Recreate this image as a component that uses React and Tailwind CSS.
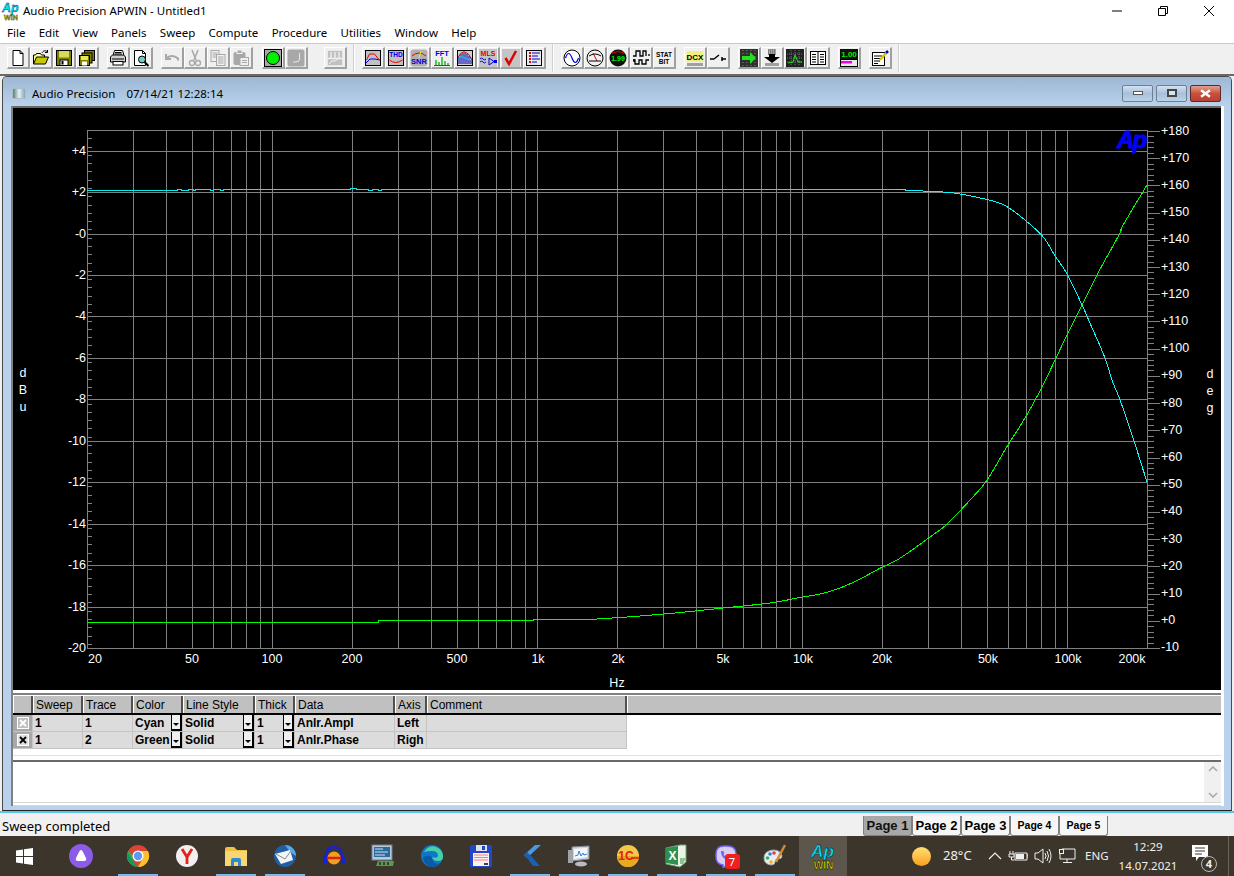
const sans = "font-['Noto_Sans',sans-serif]"

const logX = f => 87 + (Math.log10(f) - Math.log10(20)) * 265
const dbY = d => 648 - (d + 20) * 20.72
const degY = d => 131 + (180 - d) * 2.721

const gridFreqs = []
for (const dec of [10, 100, 1000, 10000, 100000]) {
  for (let m = 1; m <= 9; m++) {
    const f = dec * m
    if (f >= 20 && f <= 200000) gridFreqs.push(f)
  }
}

const xLabels = [['20', 95], ['50', 192], ['100', 272], ['200', 352], ['500', 457], ['1k', 538], ['2k', 618], ['5k', 723], ['10k', 803], ['20k', 882], ['50k', 988], ['100k', 1068], ['200k', 1132]]

// catmull-rom through the measured points, so the traces don't look faceted
function smooth(pts) {
  const out = []
  for (let i = 0; i < pts.length - 1; i++) {
    const p0 = pts[Math.max(i - 1, 0)], p1 = pts[i], p2 = pts[i + 1], p3 = pts[Math.min(i + 2, pts.length - 1)]
    for (let t = 0; t < 1; t += 0.125) {
      const a = t * t, b = a * t
      const x = 0.5 * (2 * p1[0] + (p2[0] - p0[0]) * t + (2 * p0[0] - 5 * p1[0] + 4 * p2[0] - p3[0]) * a + (3 * p1[0] - p0[0] - 3 * p2[0] + p3[0]) * b)
      const y = 0.5 * (2 * p1[1] + (p2[1] - p0[1]) * t + (2 * p0[1] - 5 * p1[1] + 4 * p2[1] - p3[1]) * a + (3 * p1[1] - p0[1] - 3 * p2[1] + p3[1]) * b)
      out.push(`${x.toFixed(1)},${y.toFixed(1)}`)
    }
  }
  out.push(pts[pts.length - 1].join(','))
  return out.join(' ')
}

const cyanFlat = '87,190.5 177,190.5 177,189.5 181,189.5 181,190.5 188,190.5 188,189.5 193,189.5 193,190.5 195,190.5 195,189.5 210,189.5 210,190.5 213,190.5 213,189.5 220,189.5 220,190.5 223,190.5 223,189.5 350,189.5 350,188.5 356,188.5 356,189.5 368,189.5 368,190.5 372,190.5 372,189.5 378,189.5 378,190.5 381,190.5 381,189.5 895,189.5'
const cyanCurve = smooth([[895, 189.5], [923, 191], [951, 192.7], [977, 197.3], [997, 202.3], [1008, 207.3], [1025, 220], [1043, 236.7], [1055, 255.7], [1067, 274], [1082, 305], [1093, 330], [1105, 358], [1112, 380], [1120, 400], [1133, 438], [1147, 482]])
const greenFlat = '87,622.5 378,622.5 378,620.5 533,620.5 533,619.5 590,619.5'
const greenCurve = smooth([[590, 619.5], [640, 616], [680, 612.5], [723, 608], [770, 603], [800, 597.5], [820, 594], [840, 588], [860, 579], [880, 568.3], [897, 560], [912, 550], [930, 537], [947, 524], [970, 500], [987, 480], [1008, 445], [1025, 418], [1042, 387], [1056, 358], [1067, 335], [1082, 305], [1098, 273], [1120, 233], [1122, 227], [1147, 185]])

function Plot() {
  const leftTicks = []
  for (let i = 0; i <= 62; i++) leftTicks.push(5 - i * 0.4)
  const rightTicks = []
  for (let d = -10; d <= 180; d += 2) rightTicks.push(d)
  const degLabels = []
  for (let d = 180; d >= -10; d -= 10) degLabels.push(d)
  return (
    <svg viewBox="13 108 1208 582" width="1208" height="582" className="block font-['Liberation_Sans',sans-serif]">
      <g stroke="#808080" strokeWidth="1" shapeRendering="crispEdges">
        {gridFreqs.map(f => <line key={f} x1={logX(f)} x2={logX(f)} y1="130.5" y2="648" />)}
        {[-20, -18, -16, -14, -12, -10, -8, -6, -4, -2, 0, 2, 4, 5].map(d => <line key={d} x1="87" x2="1147" y1={Math.round(dbY(d)) + 0.5} y2={Math.round(dbY(d)) + 0.5} />)}
        <line x1="1147.5" x2="1147.5" y1="130" y2="648" />
        {leftTicks.map(d => <line key={d} x1="87" x2="92" y1={Math.round(dbY(d)) + 0.5} y2={Math.round(dbY(d)) + 0.5} />)}
        {rightTicks.map(d => <line key={d} x1="1147" x2={d % 10 === 0 ? 1160 : 1154} y1={Math.round(degY(d)) + 0.5} y2={Math.round(degY(d)) + 0.5} />)}
      </g>
      <polyline points={greenFlat} fill="none" stroke="#00ff00" strokeWidth="1" shapeRendering="crispEdges" />
      <polyline points={greenCurve} fill="none" stroke="#00ff00" strokeWidth="1" shapeRendering="crispEdges" />
      <polyline points={cyanFlat} fill="none" stroke="#00f0f0" strokeWidth="1" shapeRendering="crispEdges" />
      <polyline points={cyanCurve} fill="none" stroke="#00ffff" strokeWidth="1" shapeRendering="crispEdges" />
      <g fill="#ffffff" fontSize="12.5">
        {[4, 2, 0, -2, -4, -6, -8, -10, -12, -14, -16, -18, -20].map(d => (
          <text key={d} x="86" y={dbY(d) + 4} textAnchor="end">{d > 0 ? `+${d}` : d === 0 ? '-0' : d}</text>
        ))}
        {degLabels.map(d => <text key={d} x="1161" y={degY(d) + 3.5}>{d >= 0 ? `+${d}` : d}</text>)}
        {xLabels.map(([t, x]) => <text key={t} x={x} y="663" textAnchor="middle">{t}</text>)}
        <text x="617" y="687" textAnchor="middle">Hz</text>
        <text x="23" y="377" textAnchor="middle">d</text>
        <text x="23" y="394" textAnchor="middle">B</text>
        <text x="23" y="411" textAnchor="middle">u</text>
        <text x="1210" y="378" textAnchor="middle">d</text>
        <text x="1210" y="395" textAnchor="middle">e</text>
        <text x="1210" y="412" textAnchor="middle">g</text>
      </g>
      <text x="1117" y="148" fill="#0000ff" stroke="#0000ff" strokeWidth="0.9" fontSize="24" fontWeight="700" fontStyle="italic" letterSpacing="-1.5">Ap</text>
    </svg>
  )
}

const txt = (s, x, y, fill, size = 7) => (
  <text x={x} y={y} fill={fill} fontSize={size} fontWeight="700" fontFamily="'Liberation Sans',sans-serif" textAnchor="middle">{s}</text>
)

const Frame = ({ bg = '#c0c0c0', children }) => (
  <>
    <rect x="1.5" y="1.5" width="15" height="15" fill={bg} stroke="#000" />
    {children}
  </>
)

const Gly = {
  new: <><path d="M4 1.5h7l3 3v12H4z" fill="#fff" stroke="#000" /><path d="M11 1.5v3h3" fill="none" stroke="#000" /></>,
  open: <><path d="M1.5 15V6h2l1-1.5h4L9.5 6h3v2" fill="#ffffa0" stroke="#000" /><path d="M1.5 15l3-7h12l-3 7z" fill="#c8c800" stroke="#000" /><path d="M10 4c1-2 3-3 5-1.500M15.500 1v2.500h-2.500" fill="none" stroke="#000" /></>,
  save: <><rect x="1.5" y="1.5" width="15" height="15" fill="#808000" stroke="#000" /><rect x="4" y="2" width="10" height="6.5" fill="#d8d860" /><rect x="5" y="11" width="8" height="5.5" fill="#fff" stroke="#000" /><rect x="6.5" y="12" width="2" height="3.5" fill="#000" /></>,
  saveall: <><rect x="6.5" y="1.5" width="10" height="10" fill="#808000" stroke="#000" /><rect x="4" y="4" width="10" height="10" fill="#808000" stroke="#000" /><rect x="1.5" y="6.5" width="10" height="10" fill="#808000" stroke="#000" /><rect x="3" y="7" width="7" height="4" fill="#e8e860" /><rect x="4" y="12.5" width="5" height="4" fill="#fff" /></>,
  print: <><path d="M5.5 1.5h8l1.5 5H4z" fill="#fff" stroke="#000" /><path d="M6 3.500h6.500M5.500 5h7.500" stroke="#000" /><path d="M1.5 8l2-2h11l2 2v5h-15z" fill="#d0d0d0" stroke="#000" /><path d="M3 10h12" stroke="#000" /><rect x="4" y="12.5" width="10" height="3.5" fill="#fff" stroke="#000" /></>,
  preview: <><path d="M2.5 1.5h8l3 3v12h-11z" fill="#fff" stroke="#000" /><path d="M10.5 1.5v3h3" fill="none" stroke="#000" /><circle cx="10" cy="10.5" r="3.5" fill="#66cccc" stroke="#000" /><path d="M12.5 13l4 4" stroke="#000" strokeWidth="2" /></>,
  undo: <path d="M3 5v5h5M3.500 9.500C6 6.500 11 6 15 9.500v2" fill="none" stroke="#a8a8a8" strokeWidth="2" />,
  cut: <><path d="M6 1l4 10M12 1L8 11" stroke="#a8a8a8" strokeWidth="1.5" /><circle cx="6" cy="14" r="2.5" fill="none" stroke="#a8a8a8" strokeWidth="1.3" /><circle cx="12" cy="14" r="2.5" fill="none" stroke="#a8a8a8" strokeWidth="1.3" /></>,
  copy: <><rect x="2" y="1.5" width="8" height="11" fill="#f0f0f0" stroke="#a8a8a8" /><path d="M3.500 4h5M3.500 6h5M3.500 8h5" stroke="#a8a8a8" /><rect x="7.5" y="5.5" width="8.5" height="11" fill="#f0f0f0" stroke="#a8a8a8" /><path d="M9 8h5.500M9 10h5.500M9 12h5.500M9 14h5.500" stroke="#a8a8a8" /></>,
  paste: <><rect x="1.5" y="3" width="12" height="13" rx="2" fill="#a8a8a8" /><rect x="5" y="1" width="5" height="3.5" fill="#a8a8a8" stroke="#f0f0f0" /><rect x="8" y="8.5" width="8.5" height="8" fill="#f0f0f0" stroke="#a8a8a8" /><path d="M10 11.500h5M10 13.500h5" stroke="#a8a8a8" /></>,
  go: <><rect x="0.5" y="0.5" width="17" height="17" fill="#a8a8a8" stroke="#000" /><circle cx="9" cy="9" r="6.5" fill="#00f000" stroke="#000" /></>,
  stop: <><rect x="0.5" y="0.5" width="17" height="17" rx="2" fill="#a8a8a8" /><path d="M12.500 4v6q0 3-3.500 3H6" fill="none" stroke="#e8e8e8" /></>,
  graphOff: <><rect x="1.5" y="1.5" width="15" height="15" fill="#c0c0c0" stroke="#e8e8e8" /><path d="M2 9.500h14M5 3v6M9 3v6M13 3v6" stroke="#f0f0f0" strokeWidth="1.3" /><path d="M3 15l3-3h3l3-2 3-1" fill="none" stroke="#f0f0f0" /></>,
  sweep: <Frame><path d="M2.500 11l3-6h5l4 5" fill="none" stroke="#f00000" /><path d="M2 14l4-4h5l5 1" fill="none" stroke="#0000f0" /></Frame>,
  thd: <Frame>{txt('THD', 9, 8, '#0000e0', 6.5)}<path d="M2.500 11q6 5 13 0" fill="none" stroke="#f00000" /></Frame>,
  snr: <><rect x="0.5" y="0.5" width="17" height="17" rx="3" fill="#b0b0b0" /><path d="M2 7q7-6 14 0" fill="none" stroke="#f00000" /><path d="M11 2L9 9" stroke="#f0f000" />{txt('SNR', 9, 15, '#0000e0', 7.5)}</>,
  fft: <>{txt('FFT', 9, 7, '#0000f0', 7.5)}<path d="M1 16.500h16" stroke="#f00000" /><path d="M3 16v-5M6 16v-3M9 16V8M12 16v-4M15 16v-2" stroke="#00b000" strokeWidth="1.3" /></>,
  bars: <Frame bg="#d0d0d0"><path d="M3 15V8M5 15V5M7 15V4M9 15V4M11 15V5M13 15V7M15 15v-4" stroke="#0000c0" /><path d="M2 9q3-3 7 0t7 0" fill="none" stroke="#00e0e0" /><path d="M2 9q3-7 7-6t7 8" fill="none" stroke="#c00000" /></Frame>,
  mls: <><rect width="18" height="18" fill="#c4c4c4" />{txt('MLS', 9, 7, '#e00000', 7)}<path d="M1 10q2-2 3 0t3 0M1 13q2-2 3 0t3 0" fill="none" stroke="#0000e0" /><path d="M10 9v7l5-3.500z" fill="none" stroke="#0000e0" /><rect x="15" y="11" width="3" height="3" fill="#0000e0" /></>,
  check: <><rect width="18" height="18" fill="#c4c4c4" /><path d="M3.500 9l3.500 6L14 2" fill="none" stroke="#e00000" strokeWidth="2.5" /></>,
  list: <Frame bg="#e8e8e8"><path d="M4 4h2M4 7h2M4 10h2M4 13h2" stroke="#f00000" strokeWidth="2" /><path d="M7 4h8M7 7h6M7 10h8M7 13h5" stroke="#0000d0" /></Frame>,
  sine: <><circle cx="9" cy="9" r="8" fill="#fff" stroke="#000" /><path d="M2.500 9q3-9 6.500 0t6.500 0" fill="none" stroke="#0000e0" strokeWidth="1.2" /></>,
  meter: <><circle cx="9" cy="9" r="8" fill="#f0f0f0" stroke="#000" /><path d="M3 7q6-4 12 0" fill="none" stroke="#000" /><path d="M7 4l4 8" stroke="#e00000" /><path d="M3 12h12" stroke="#000" /></>,
  disp: <><circle cx="9" cy="9" r="8.5" fill="#101010" /><path d="M3 4q6-3 12 0" stroke="#e00000" fill="none" />{txt('1.99', 9, 12, '#00f000', 7)}</>,
  square: <path d="M1 7h3V2h4v5h3V2h3v5M17 5v2M1 11h2v4h4v-4h3v4h4v-4h3M2 10v3" fill="none" stroke="#000" strokeWidth="1.3" />,
  stat: <>{txt('STAT', 9, 8, '#000', 6.5)}{txt('BIT', 9, 15, '#000', 6.5)}</>,
  dcx: <><rect x="0.5" y="2" width="17" height="11" fill="#f0f080" />{txt('DCX', 9, 11, '#000', 8)}<rect x="1" y="14" width="16" height="3" fill="#a0a0a0" /></>,
  sw: <path d="M1 10h4M5 10l5-4M13 8v4M13 10h4" fill="none" stroke="#000" strokeWidth="1.5" />,
  fwd: <><rect width="18" height="18" fill="#303030" /><path d="M3 1v16M7 1v16M11 1v16M15 1v16" stroke="#808080" strokeDasharray="1 2" /><path d="M2 7h8V3l6 6-6 6v-4H2z" fill="#20e020" /></>,
  down: <><rect x="5" y="0" width="8" height="6" fill="#a0a0a0" /><path d="M5 1h8M5 3h8M5 5h8" stroke="#606060" strokeDasharray="1 1" /><path d="M1 8h5V5h6v3h5l-8 6z" fill="#000" /><rect x="2" y="14" width="14" height="3" fill="#a0a0a0" /></>,
  scope: <><rect width="18" height="18" fill="#202020" /><path d="M5 1v16M9 1v16M13 1v16M1 5h16M1 9h16M1 13h16" stroke="#707070" strokeDasharray="1 1" /><path d="M2 14l5-1 2-7 3 7h4" fill="none" stroke="#20e020" /></>,
  book: <><rect x="1.5" y="2.5" width="15" height="13" fill="#fff" stroke="#000" /><path d="M9 3v12M3 5.500h4M3 8h4M3 10.500h4M3 13h4M11 5.500h4M11 8h4M11 10.500h4M11 13h4" stroke="#000" /></>,
  gauge: <><rect width="18" height="10" fill="#101010" />{txt('1.00', 9, 8, '#00f000', 8)}<rect x="0.5" y="10.5" width="17" height="7" fill="#e8e8e8" stroke="#000" /><rect x="1" y="12" width="11" height="2.5" fill="#f000f0" /></>,
  notes: <><rect x="1.5" y="3.5" width="12" height="13" fill="#fff" stroke="#000" /><path d="M3 7h8M3 9.500h8M3 12h6M3 14.500h4" stroke="#000" /><path d="M9 11l6-7" stroke="#e0c000" strokeWidth="2.5" /><path d="M15 4l2-2" stroke="#0000c0" strokeWidth="2.5" /></>,
}

const toolGroups = [
  { ml: 'ml-[7px]', items: ['new', 'open', 'save', 'saveall'] },
  { ml: 'ml-[8px]', items: ['print', 'preview'] },
  { ml: 'ml-[8px]', items: ['undo', 'cut', 'copy', 'paste'] },
  { ml: 'ml-[9px]', items: ['go', 'stop'] },
  { ml: 'ml-[16px]', items: ['graphOff'] },
  { ml: 'ml-[6px]', sep: true, items: ['sweep', 'thd', 'snr', 'fft', 'bars', 'mls', 'check', 'list'] },
  { ml: 'ml-[6px]', sep: true, items: ['sine', 'meter', 'disp', 'square', 'stat'] },
  { ml: 'ml-[8px]', items: ['dcx', 'sw'] },
  { ml: 'ml-[8px]', items: ['fwd', 'down', 'scope', 'book'] },
  { ml: 'ml-[8px]', items: ['gauge'] },
  { ml: 'ml-[8px]', items: ['notes'] },
]

function Toolbar() {
  return (
    <div className="h-[31px] shrink-0 flex items-center bg-[#f0f0f0] border-t border-t-[#c8c8c8] border-b border-b-[#f0f0f0] pb-[1px]">
      {toolGroups.map((g, i) => (
        <div key={i} className={`flex items-center ${g.ml}`}>
          {g.sep && <div className="w-[2px] h-[28px] bg-[#d0d0d0] border-r border-white mr-[7px]" />}
          {g.items.map(k => (
            <div key={k} className="w-[23px] h-[22px] flex items-center justify-center bg-[#f0f0f0] border-t border-l border-t-white border-l-white border-r-2 border-b-2 border-r-[#a0a0a0] border-b-[#a0a0a0]">
              <svg viewBox="0 0 18 18" width="18" height="18">{Gly[k]}</svg>
            </div>
          ))}
        </div>
      ))}
      <div className="w-[2px] h-[28px] bg-[#d0d0d0] border-r border-white ml-[6px]" />
    </div>
  )
}

function ApLogo({ size = 24 }) {
  return (
    <svg viewBox="0 0 26 26" width={size} height={size} className="overflow-visible">
      <text x="12" y="14" fill="#00e0f0" stroke="#002030" strokeWidth="0.5" fontSize="18" fontWeight="700" fontStyle="italic" textAnchor="middle" fontFamily="'Liberation Sans',sans-serif">Ap</text>
      <text x="13" y="26" fill="#f8f800" stroke="#000" strokeWidth="0.5" fontSize="10.5" fontWeight="700" textAnchor="middle" fontFamily="'Liberation Sans',sans-serif">WIN</text>
    </svg>
  )
}

const WinBtn = ({ children, red }) => (
  <div className={`w-[31px] h-[17px] flex items-center justify-center rounded-[2px] border ${red ? 'border-[#5c2a2a] bg-gradient-to-b from-[#e0a090] via-[#c8503c] to-[#b84030]' : 'border-[#6d7f94] bg-gradient-to-b from-[#d4e2f0] via-[#a8c0da] to-[#bcd2e8]'}`}>
    {children}
  </div>
)

const cols = [
  ['', 'w-[20px]'], ['Sweep', 'w-[50px]'], ['Trace', 'w-[50px]'], ['Color', 'w-[50px]'], ['Line Style', 'w-[72px]'],
  ['Thick', 'w-[40px]'], ['Data', 'w-[100px]'], ['Axis', 'w-[32px]'], ['Comment', 'w-[200px]'],
]

const rows = [
  { on: false, sweep: '1', trace: '1', color: 'Cyan', style: 'Solid', thick: '1', data: 'Anlr.Ampl', axis: 'Left' },
  { on: true, sweep: '1', trace: '2', color: 'Green', style: 'Solid', thick: '1', data: 'Anlr.Phase', axis: 'Righ' },
]

const Drop = () => (
  <div className="ml-auto shrink-0 w-[11px] h-[16px] bg-[#f0f0f0] border-r-2 border-b-2 border-l border-black flex items-end justify-center pb-[3px]">
    <div className="w-0 h-0 border-x-[3px] border-x-transparent border-t-[3px] border-t-black" />
  </div>
)

const Cell = ({ w, children, drop }) => (
  <div className={`${w} h-[16px] flex items-center overflow-hidden whitespace-nowrap border-r border-[#c4c4c4] pl-[2px]`}>
    {children}
    {drop && <Drop />}
  </div>
)

function TraceTable() {
  return (
    <div className="shrink-0 bg-white font-['Liberation_Sans',sans-serif] text-black">
      <div className="flex h-[20px] bg-[#c0c0c0] border-t border-white border-b-2 border-b-black text-[12px]">
        {cols.map(([t, w]) => (
          <div key={t || 'blank'} className={`${w} pl-[2px] leading-[18px] border-l border-l-white border-r-2 border-r-[#505050]`}>{t}</div>
        ))}
        <div className="flex-1 border-l border-l-white" />
      </div>
      <div className="w-[614px] bg-[#dcdcdc] text-[12px] font-bold">
        {rows.map(r => (
          <div key={r.trace} className="flex border-b border-[#c4c4c4]">
            <div className="w-[20px] h-[16px] bg-[#a8a8a8] flex items-center justify-center border-r border-[#c4c4c4]">
              <div className={`w-[12px] h-[12px] flex items-center justify-center border border-white ${r.on ? 'bg-[#e0e0e0] text-black' : 'bg-[#c0c0c0] text-white'}`}>
                <svg viewBox="0 0 8 8" width="8" height="8"><path d="M1 1l6 6M7 1l-6 6" stroke="currentColor" strokeWidth="1.8" /></svg>
              </div>
            </div>
            <Cell w="w-[50px]">{r.sweep}</Cell>
            <Cell w="w-[50px]">{r.trace}</Cell>
            <Cell w="w-[50px]" drop>{r.color}</Cell>
            <Cell w="w-[72px]" drop>{r.style}</Cell>
            <Cell w="w-[40px]" drop>{r.thick}</Cell>
            <Cell w="w-[100px]">{r.data}</Cell>
            <Cell w="w-[32px]">{r.axis}</Cell>
            <Cell w="w-[200px]"></Cell>
          </div>
        ))}
      </div>
    </div>
  )
}

function ChildWindow() {
  return (
    <div className="flex-1 min-h-0 flex flex-col ml-[2px] mr-[2px] rounded-t-[5px] border border-[#4a4a4a] border-b-[#202020] bg-[#b9d1ea] overflow-hidden">
      <div className="h-[29px] shrink-0 flex items-center bg-gradient-to-b from-[#9db8d5] to-[#b9d2ec] pl-[9px] pr-[10px] pt-[4px] text-[11.5px] text-black">
        <div className="w-[14px] h-[11px] mr-[6px] bg-gradient-to-r from-[#3f8a7a] via-[#e8f0f4] to-[#8aa4bc] border border-[#b0bcc8]" />
        <span>Audio Precision</span>
        <span className="ml-[11px]">07/14/21 12:28:14</span>
        <div className="ml-auto flex items-center gap-[3px] mt-[-1px]">
          <WinBtn><div className="w-[10px] h-[4px] bg-white border border-[#555]" /></WinBtn>
          <WinBtn><div className="w-[10px] h-[8px] bg-[#d8e4f0] border-2 border-[#444]" /></WinBtn>
          <WinBtn red>
            <svg viewBox="0 0 10 8" width="11" height="9"><path d="M1 1l8 6M9 1l-8 6" stroke="#fff" strokeWidth="2.2" /></svg>
          </WinBtn>
        </div>
      </div>
      <div className="flex-1 min-h-0 flex pl-[8px] pr-[7px] pb-[4px]">
        <div className="w-[2px] bg-[#808080]" />
        <div className="flex-1 min-w-0 flex flex-col bg-white pr-[3px]">
          <div className="h-[2px] shrink-0 bg-[#696969]" />
          <div className="bg-black h-[582px] shrink-0"><Plot /></div>
          <div className="h-[3px] shrink-0 bg-white" />
          <div className="h-[2px] shrink-0 bg-[#808080]" />
          <TraceTable />
          <div className="h-[6px] shrink-0 bg-white" />
          <div className="h-[1px] shrink-0 bg-[#e0e0e0]" />
          <div className="h-[4px] shrink-0 bg-white" />
          <div className="h-[43px] shrink-0 flex border-t-2 border-t-[#696969] border-b border-b-[#d8d8d8] bg-white">
            <div className="flex-1" />
            <div className="w-[17px] bg-[#f0f0f0] flex flex-col items-center justify-between py-[4px]">
              <svg viewBox="0 0 10 6" width="10" height="6"><path d="M1 5l4-4 4 4" fill="none" stroke="#a8a8a8" strokeWidth="1.5" /></svg>
              <svg viewBox="0 0 10 6" width="10" height="6"><path d="M1 1l4 4 4-4" fill="none" stroke="#a8a8a8" strokeWidth="1.5" /></svg>
            </div>
          </div>
          <div className="flex-1 bg-white border-b border-[#d8d8d8]" />
        </div>
      </div>
    </div>
  )
}

const tabs = [
  ['Page 1', 'bg-[#a8a8a8] text-[13px] text-[#111]'],
  ['Page 2', 'bg-[#f6f6f6] text-[13px] text-black'],
  ['Page 3', 'bg-[#f6f6f6] text-[13px] text-black'],
  ['Page 4', 'bg-[#f6f6f6] text-[10.5px] text-black'],
  ['Page 5', 'bg-[#f6f6f6] text-[10.5px] text-black'],
]

function StatusBar() {
  return (
    <div className="h-[23px] shrink-0 flex items-end justify-between bg-[#f0f0f0] border-t border-[#e8e8e8]">
      <span className={`pl-[2px] pb-[1px] text-[13px] leading-[18px] text-black ${sans}`}>Sweep completed</span>
      <div className="flex h-[20px] mr-[126px] font-['Liberation_Sans',sans-serif] font-bold">
        {tabs.map(([t, c]) => (
          <div key={t} className={`w-[49px] flex items-center justify-center rounded-b-[3px] border-x border-b border-[#808080] ${c}`}>{t}</div>
        ))}
      </div>
    </div>
  )
}

const Ic = ({ children }) => <svg viewBox="0 0 24 24" width="24" height="24">{children}</svg>

const apps = [
  { k: 'chrome', run: true, el: <Ic><circle cx="12" cy="12" r="11" fill="#db4437" /><path d="M12 12L2.500 17.500A11 11 0 0 1 2.500 6.500L7 12z" fill="#3aa757" /><path d="M1.500 8.500L7 17l5.500 6A11 11 0 0 1 1.500 15z" fill="#0f9d58" /><path d="M12 7h10A11 11 0 0 1 12 23l5-9z" fill="#fbc02d" /><circle cx="12" cy="12" r="5.5" fill="#fff" /><circle cx="12" cy="12" r="4.2" fill="#5b9bf0" /></Ic> },
  { k: 'yandex', el: <Ic><circle cx="12" cy="12" r="11" fill="#f0f0f0" /><path d="M7 5l5 8 5-8M12 13v7" fill="none" stroke="#e3231b" strokeWidth="2.8" /></Ic> },
  { k: 'folder', run: true, el: <Ic><path d="M1 5q0-2 2-2h7l3 3h10v16H1z" fill="#f0c040" /><path d="M1 7h22v15H1z" fill="#f6d773" /><path d="M7 22v-6q0-2 2-2h6q2 0 2 2v6h-3v-4h-4v4z" fill="#2a8ad4" /></Ic> },
  { k: 'bird', run: true, el: <Ic><circle cx="12" cy="12" r="11" fill="#1f5fa8" /><path d="M12 1a11 11 0 0 1 11 11l-6-4z" fill="#5aa8e8" /><path d="M2 10l15-4 3 10-12 4z" fill="#f4f4f4" /><path d="M3 10l9 5 6-8" fill="none" stroke="#7a8a9c" /></Ic> },
  { k: 'phones', el: <Ic><path d="M4 15V11a8 8 0 0 1 16 0v4" fill="none" stroke="#1520d8" strokeWidth="2.5" /><rect x="1" y="12" width="4" height="8" rx="2" fill="#1520d8" /><rect x="19" y="12" width="4" height="8" rx="2" fill="#1520d8" /><circle cx="12" cy="14" r="6.5" fill="#f0a020" /><path d="M5 14h14" stroke="#e02010" strokeWidth="2.5" /></Ic> },
  { k: 'ram', el: <Ic><rect x="1" y="1" width="20" height="15" fill="#b8c8d8" stroke="#708090" /><rect x="3" y="3" width="16" height="10" fill="#2a6a9c" /><path d="M4 5h8M4 8h13M4 11h10" stroke="#d0e0f0" /><path d="M5 22l2-5h16l-1 5z" fill="#5a9a50" /><path d="M8 18h2v3H8zM12 18h2v3h-2zM16 18h2v3h-2z" fill="#2a4a28" /></Ic> },
  { k: 'edge', el: <Ic><circle cx="12" cy="12" r="11" fill="#1276c8" /><path d="M4 8a10 10 0 0 1 19 5q0 4-5 4t-6-4q5 2 6-1 0-5-6-5-5 0-8 1z" fill="#44d0a8" /><path d="M12 13c0 5 4 8 8 6a11 11 0 0 1-9 4q-7-2-8-9 3-4 9-1z" fill="#0c5aa6" /></Ic> },
  { k: 'floppy', el: <Ic><rect x="1" y="1" width="22" height="22" rx="1.5" fill="#2048c8" /><rect x="7" y="1" width="11" height="6" fill="#e0e0f0" /><rect x="13" y="2" width="3" height="4" fill="#2048c8" /><rect x="4" y="9" width="16" height="13" fill="#fff0f0" /><path d="M5 11h14M5 13.500h14M5 16h14" stroke="#f08088" /><path d="M15 20h4" stroke="#404040" strokeWidth="2" /></Ic> },
  { k: 'flutter', run: true, el: <Ic><path d="M17 1h6L9 14l-3-3z" fill="#4a9ae0" /><path d="M6 11l3 3 6 8h7l-8-9-5-5z" fill="#1a5fb0" /></Ic> },
  { k: 'mon', run: true, el: <Ic><path d="M5 3l17-1v13L5 17z" fill="#d0d4d8" stroke="#808890" /><path d="M7 5l13-1v9L7 15z" fill="#f4f8fc" /><path d="M8 12l3-1 1-4 2 5 2-3 1 2 3-1" fill="none" stroke="#3080d0" /><path d="M1 6h5v13H1z" fill="#a0a4a8" /><ellipse cx="14" cy="20" rx="6" ry="2.5" fill="#b8bcc0" /></Ic> },
  { k: 'onec', run: true, el: <Ic><circle cx="12" cy="12" r="11" fill="#f4c84a" /><path d="M1 12a11 11 0 0 0 22 0z" fill="#e8a820" /><text x="10" y="16" fontSize="12" fontWeight="700" fill="#e02010" textAnchor="middle" fontFamily="'Liberation Sans',sans-serif">1C</text><path d="M15 14h8" stroke="#e02010" strokeWidth="1.5" /></Ic> },
  { k: 'excel', run: true, el: <Ic><path d="M1 4l14-3h6v17l-6 5-14-3z" fill="#e8f4e8" stroke="#70a070" /><path d="M1 4l12-2v19L1 19z" fill="#2f8f4f" /><text x="7.5" y="15.5" fontSize="12" fontWeight="700" fill="#fff" textAnchor="middle" fontFamily="'Liberation Sans',sans-serif">X</text><path d="M15 14h6l-3 6h-3z" fill="#90c090" /></Ic> },
  { k: 'viber', run: true, badge: '7', el: <Ic><path d="M2 10q0-8 8-8h3q9 0 9 8v3q0 7-9 8l-4 3v-3q-7-1-7-8z" fill="#d8ccf0" stroke="#7360f2" strokeWidth="1.5" /><path d="M7 7c0 6 4 9 8 9l1-2-2-1.500-1 1c-2-1-3-2-3.500-3.500l1-1L9 7z" fill="#7360f2" /></Ic> },
  { k: 'palette', run: true, el: <Ic><path d="M1 14q0-7 9-8 8 0 9 6 0 3-4 3-3 0-3 3 0 3-4 3-7-1-7-7z" fill="#e8ecf0" stroke="#a0a8b0" /><circle cx="7" cy="10" r="1.8" fill="#3080e0" /><circle cx="4.5" cy="14" r="1.8" fill="#30b050" /><circle cx="11" cy="9" r="1.8" fill="#e04030" /><circle cx="8" cy="18" r="1.8" fill="#f0b020" /><path d="M22 1l-9 17" stroke="#d08a30" strokeWidth="2.5" /></Ic> },
]

function Taskbar() {
  return (
    <div className={`h-[40px] shrink-0 flex items-stretch bg-[#3c352b] text-[12px] text-[#f0f0f0] ${sans}`}>
      <div className="w-[48px] flex items-center justify-center">
        <svg viewBox="0 0 17 17" width="17" height="17"><path d="M0 2.500l7-1v6.500H0zM8 1.300L17 0v8H8zM0 9h7v6.500l-7-1zM8 9h9v8l-9-1.300z" fill="#fff" /></svg>
      </div>
      <div className="w-[65px] flex items-center justify-center">
        <Ic><circle cx="12" cy="12" r="12" fill="#8a5ce8" /><path d="M12 6q1 0 2 2l3 6q1 3-2 3H9q-3 0-2-3l3-6q1-2 2-2z" fill="#fff" /></Ic>
      </div>
      {apps.map(a => (
        <div key={a.k} className="w-[49px] flex flex-col items-center">
          <div className="flex-1 flex items-center justify-center relative pt-[1px]">
            {a.el}
            {a.badge && <span className="absolute right-[-2px] bottom-[5px] w-[15px] h-[15px] rounded-[3px] bg-[#f02020] text-white text-[11px] leading-[15px] text-center">{a.badge}</span>}
          </div>
          <div className={`w-[40px] h-[2px] ${a.run ? 'bg-[#76b9ed]' : ''}`} />
        </div>
      ))}
      <div className="w-[48px] bg-[#5d564c] flex items-center justify-center"><ApLogo size={25} /></div>
      <div className="w-[65px]" />
      <div className="flex items-center">
        <div className="w-[19px] h-[19px] rounded-full bg-gradient-to-b from-[#ffdf70] to-[#fb9f10]" />
        <span className="ml-[12px] w-[30px] text-[13px]">28°C</span>
        <svg className="ml-[15px]" viewBox="0 0 14 8" width="14" height="8"><path d="M1 7l6-6 6 6" fill="none" stroke="#f0f0f0" strokeWidth="1.2" /></svg>
        <svg className="ml-[6px]" viewBox="0 0 20 16" width="20" height="16"><path d="M7 5h12v7H7zM19 7h1v3M2 3v3M5 3v3M1 6h5v3H1zM3.500 9v3h3" fill="none" stroke="#f0f0f0" /><path d="M8 6h8v5H8z" fill="#f0f0f0" /></svg>
        <svg className="ml-[6px]" viewBox="0 0 18 16" width="18" height="16"><path d="M1 5h3l5-4v14l-5-4H1zM11 5q2 3 0 6M13 3q3 5 0 10M15 1q4 7 0 14" fill="none" stroke="#f0f0f0" /></svg>
        <svg className="ml-[6px]" viewBox="0 0 18 16" width="18" height="16"><path d="M4 1h13v10H2V6M9 11v3M5 14.500h9" fill="none" stroke="#f0f0f0" /><rect x="1.5" y="1.5" width="4" height="4" fill="none" stroke="#f0f0f0" /></svg>
        <span className="ml-[9px] w-[27px] text-[11.5px]">ENG</span>
      </div>
      <div className="w-[72px] flex flex-col items-center justify-center leading-[19px] text-[11.5px]">
        <span>12:29</span>
        <span>14.07.2021</span>
      </div>
      <div className="w-[34px] flex items-center justify-center relative">
        <svg viewBox="0 0 18 18" width="18" height="18" className="mb-[4px]"><path d="M0 0h16v12H7l-3 4v-4H0z" fill="#fff" /><path d="M3 3h10M3 6h10M3 9h7" stroke="#3c352b" /></svg>
        <span className="absolute right-[1px] bottom-[4px] w-[16px] h-[16px] rounded-full bg-[#3c352b] border border-[#bbb] text-[11px] font-bold leading-[14px] text-center">4</span>
      </div>
      <div className="flex-1 ml-[10px] border-l border-[#6a645a]" />
    </div>
  )
}

export default function App() {
  return (
    <div className={`w-[1234px] h-[876px] flex flex-col overflow-hidden bg-[#f0f0f0] ${sans}`}>
      <div className="h-[22px] shrink-0 flex items-center bg-white text-[11.5px] text-black">
        <div className="w-[23px] pl-[2px] flex items-center"><ApLogo size={18} /></div>
        <span>Audio Precision APWIN - Untitled1</span>
        <div className="ml-auto flex items-center">
          <div className="w-[46px] flex justify-center"><svg viewBox="0 0 10 10" width="10" height="10"><path d="M0 5h10" stroke="#000" /></svg></div>
          <div className="w-[46px] flex justify-center"><svg viewBox="0 0 10 10" width="10" height="10"><path d="M0.5 2.500h7v7h-7zM2.500 2.500v-2h7v7h-2" fill="none" stroke="#000" /></svg></div>
          <div className="w-[46px] flex justify-center mr-[2px]"><svg viewBox="0 0 10 10" width="10" height="10"><path d="M0 0l10 10M10 0L0 10" stroke="#000" /></svg></div>
        </div>
      </div>
      <div className="h-[21px] shrink-0 flex items-center gap-[13.3px] pl-[7px] bg-white text-[11.5px] text-black">
        {['File', 'Edit', 'View', 'Panels', 'Sweep', 'Compute', 'Procedure', 'Utilities', 'Window', 'Help'].map(m => <span key={m}>{m}</span>)}
      </div>
      <Toolbar />
      <div className="flex-1 min-h-0 flex flex-col border-t-2 border-t-[#696969] bg-[#f0f0f0]">
        <ChildWindow />
        <div className="h-[2px] shrink-0 bg-[#5ec5e8]" />
      </div>
      <StatusBar />
      <Taskbar />
    </div>
  )
}
